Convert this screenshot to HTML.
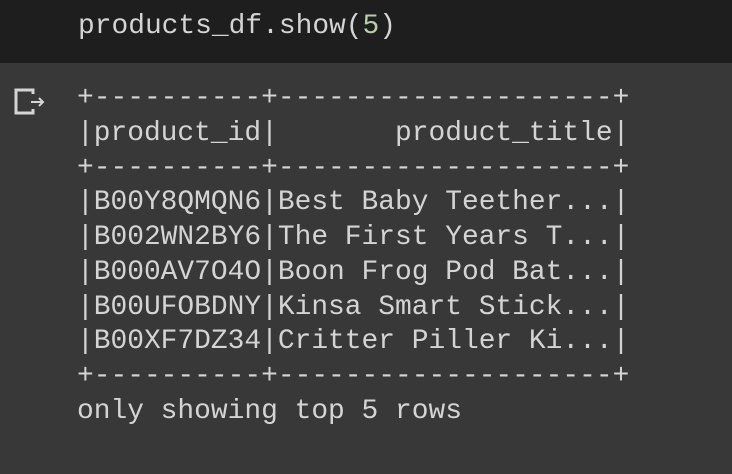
<!DOCTYPE html>
<html><head><style>
html,body{margin:0;padding:0;width:732px;height:474px;overflow:hidden;background:#383838;}
.top{position:absolute;left:0;top:0;width:732px;height:63px;background:#1e1e1e;}
pre{margin:0;position:absolute;font-family:"Courier New","Liberation Mono",monospace;font-size:27.9px;line-height:34.75px;color:#d4d4d4;white-space:pre;}
.num{color:#b5cea8;}
</style></head><body>
<div class="top"></div>
<pre style="left:78px;top:10px">products_df.show(<span class="num">5</span>)</pre>
<svg style="position:absolute;left:14px;top:88px" width="32" height="28" viewBox="0 0 32 28">
<path d="M19 6V2H2V25H19V21" stroke="#d4d4d4" stroke-width="3" fill="none"/>
<path d="M17 14H29M25 10L29 14L25 18" stroke="#d4d4d4" stroke-width="2" fill="none"/>
</svg>
<pre style="left:77px;top:82px">+----------+--------------------+
|product_id|       product_title|
+----------+--------------------+
|B00Y8QMQN6|Best Baby Teether...|
|B002WN2BY6|The First Years T...|
|B000AV7O4O|Boon Frog Pod Bat...|
|B00UFOBDNY|Kinsa Smart Stick...|
|B00XF7DZ34|Critter Piller Ki...|
+----------+--------------------+
only showing top 5 rows</pre>
</body></html>
